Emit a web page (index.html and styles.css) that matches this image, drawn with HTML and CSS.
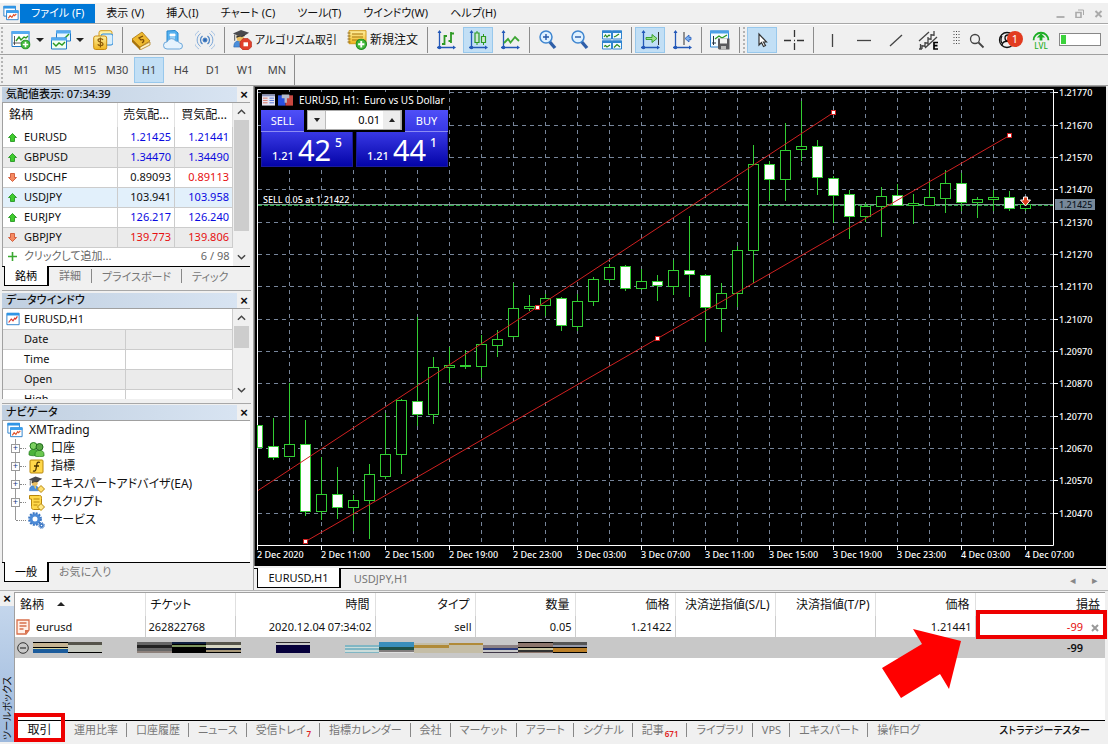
FILE: index.html
```
<!DOCTYPE html>
<html lang="ja">
<head>
<meta charset="utf-8">
<title>XMTrading</title>
<link rel="stylesheet" href="styles.css">
</head>
<body>
<svg class="defs" width="0" height="0" aria-hidden="true">
  <defs>
    <linearGradient id="gold" x1="0" y1="0" x2="0" y2="1"><stop offset="0" stop-color="#fff0a0"/><stop offset="1" stop-color="#efb41c"/></linearGradient>
    <symbol id="i-up" viewBox="0 0 9 9"><path d="M4.500 0.500L8.500 4.500H6.500V8.500H2.500V4.500H.5z" fill="#3fcb2e" stroke="#1b8f16" stroke-width=".8"/></symbol>
    <symbol id="i-down" viewBox="0 0 9 9"><path d="M4.500 8.500L8.500 4.500H6.500V.5H2.500V4.500H.5z" fill="#f58a62" stroke="#cc4a26" stroke-width=".8"/></symbol>
    <symbol id="i-window" viewBox="0 0 16 16"><path d="M1 1.500h14v13H1z" fill="#fff" stroke="#1e78c8"/><path d="M1 1h14v3H1z" fill="#2f95e6"/><path d="M3 12l3-4 2 2 2-3 1 1 2-3" fill="none" stroke="#d8372c" stroke-width="1.300"/></symbol>
    <symbol id="i-app" viewBox="0 0 18 18"><path d="M1 1.500h13v11H1z" fill="#fff" stroke="#1e78c8"/><path d="M.5 1h14v3H.5z" fill="#2f95e6"/><path d="M4 6.500h13v10H4z" fill="#fff" stroke="#1e78c8"/><path d="M3.500 6h14v3h-14z" fill="#3aa0ee"/><path d="M6 15l2-3 2 2 2-3 1 1 2-2" fill="none" stroke="#e0522c" stroke-width="1.300"/></symbol>
    <symbol id="i-axes" viewBox="0 0 20 20"><path d="M3.500 1v18M1 17.500h17" stroke="#2358b8" stroke-width="1.300" fill="none"/><path d="M1.500 3l2-3 2 3zM17 15.500l3 2-3 2z" fill="#2358b8"/><circle cx="3.500" cy="17.500" r="1.800" fill="#2358b8"/></symbol>
    <symbol id="i-plus" viewBox="0 0 11 11"><circle cx="5.500" cy="5.500" r="5" fill="#42b83a" stroke="#1d8a20"/><path d="M5.500 2.500v6M2.500 5.500h6" stroke="#fff" stroke-width="1.800"/></symbol>
    <symbol id="i-grad" viewBox="0 0 20 20"><path d="M2 19c0-6 3-7 6-7s6 1 6 7z" fill="#4a8fdc" stroke="#265fa8" stroke-width=".6"/><circle cx="9" cy="8.500" r="4" fill="#eabf62"/><path d="M8 13h3l-1 4z" fill="#f3d060"/><path d="M1 4l9-4 9 3-8 5z" fill="#4a4a4e"/><path d="M5 6v3c3-2 6-2 9-2V5l-4 2z" fill="#333"/><path d="M3 5v7" stroke="#444"/></symbol>
  </defs>
</svg>

<header class="top">
  <nav class="menubar">
    <svg class="app-logo" viewBox="0 0 18 18"><use href="#i-app"/></svg>
    <button class="menu menu-on">ファイル (F)</button>
    <button class="menu">表示 (V)</button>
    <button class="menu">挿入(I)</button>
    <button class="menu">チャート (C)</button>
    <button class="menu">ツール(T)</button>
    <button class="menu">ウインドウ(W)</button>
    <button class="menu">ヘルプ(H)</button>
    <div class="win-ctl">
      <button aria-label="最小化"><svg viewBox="0 0 9 9"><path d="M.5 8h8" stroke="#aaa" stroke-width="1.800"/></svg></button>
      <button aria-label="元に戻す"><svg viewBox="0 0 9 9"><path d="M1 3.500h5v5H1z" fill="none" stroke="#aaa" stroke-width="1.600"/><path d="M3 1h5.500v5" fill="none" stroke="#aaa"/></svg></button>
      <button aria-label="閉じる"><svg viewBox="0 0 9 9"><path d="M1.500 2l6 6M7.500 2l-6 6" stroke="#aaa" stroke-width="1.900"/></svg></button>
    </div>
  </nav>

  <div class="toolbar">
    <i class="grip"></i>
    <button class="tb tb-drop" aria-label="新規チャート"><svg viewBox="0 0 20 20"><path d="M1 1.500h17v15H1z" fill="#fff" stroke="#1e78c8"/><path d="M.5 1h18v3H.5z" fill="#55aaf0"/><path d="M3.500 6v9M2 13h13" stroke="#333" stroke-width=".8"/><path d="M5 11l3-4 2 3 3-3 2 1 2-2" fill="none" stroke="#2d9a23" stroke-width="1.400"/><use href="#i-plus" x="9.500" y="9.500" width="10" height="10"/></svg><b class="caret"></b></button>
    <button class="tb tb-drop" aria-label="プロファイル"><svg viewBox="0 0 20 20"><path d="M5.500 1h14v10h-14z" fill="#e8f6ff" stroke="#1e78c8"/><path d="M5 .5h15v3H5z" fill="#55aaf0"/><path d="M13 9l5-5" stroke="#2d9a23" stroke-width="1.400"/><path d="M.5 8h15v11H.5z" fill="#f4fff2" stroke="#1e78c8"/><path d="M0 7.500h16v3H0z" fill="#55aaf0"/><path d="M2 13l3 3 3-3 3 2 3-3" fill="none" stroke="#2d9a23" stroke-width="1.400"/></svg><b class="caret"></b></button>
    <button class="tb" aria-label="銘柄"><svg viewBox="0 0 20 20"><rect x="6" y=".7" width="13" height="14" rx="2" fill="#fff2a8" stroke="#d49a18"/><rect x="8" y="4" width="12" height="11" rx="2" fill="#d8eefc" stroke="#2b8ada"/><rect x=".7" y="6" width="13" height="13.500" rx="2" fill="url(#gold)" stroke="#c88a10"/><path d="M10 10c-1-2-5-2-5 .3s5 1.400 5 3.700-4 2-5.300.3M7.400 7.500v10" fill="none" stroke="#8c5a08" stroke-width="1.200"/></svg></button>
    <i class="sep"></i>
    <button class="tb" aria-label="マーケット"><svg viewBox="0 0 20 20"><path d="M1 9l8 8v3L1 12z" fill="#a8740c"/><path d="M9 17l10-5v3L9 20z" fill="#fff3c8" stroke="#a8740c" stroke-width=".7"/><path d="M1 9L11 2l8 9-10 6z" fill="#eeb930" stroke="#a8740c" stroke-width=".8"/><path d="M12 6l-4 2 2 2c3-1 4 1 1 3" fill="none" stroke="#7c4c06" stroke-width="1.300"/></svg></button>
    <button class="tb" aria-label="VPS"><svg viewBox="0 0 20 20"><path d="M4 1l8-.5 3 2.500v9H4z" fill="#55b0ee" stroke="#2588d0"/><path d="M7 4h5v2H7zM7 8h5" fill="#fff" stroke="#fff" stroke-width=".8"/><path d="M4 19a3.600 3.600 0 01.2-7.200A4.600 4.600 0 0112.600 11 3.500 3.500 0 0116.400 13 3 3 0 0116.500 19z" fill="#e6f3fd" stroke="#6aa6da"/></svg></button>
    <button class="tb" aria-label="シグナル"><svg viewBox="0 0 20 20" fill="none" stroke="#4d84c4"><circle cx="10" cy="10" r="2" fill="#2c68b4"/><path d="M7.500 6a5 5 0 000 8M12.500 6a5 5 0 010 8" stroke-width="1.300"/><path d="M5.500 3.500a8 8 0 000 13M14.500 3.500a8 8 0 010 13" stroke="#7aa6d8"/><path d="M4 1a10.500 10.500 0 000 18M16 1a10.500 10.500 0 010 18" stroke="#a8c4e4"/></svg></button>
    <i class="sep"></i>
    <button class="tb tb-algo"><svg viewBox="0 0 20 20"><use href="#i-grad" width="18" height="18"/><path d="M11 8.500h5l3.500 3.500v5L16 20h-5l-3-3v-5z" fill="#e0402c" stroke="#b0281a" stroke-width=".6"/><path d="M11.500 12.300h4.500v4h-4.500z" fill="#fff"/></svg>アルゴリズム取引</button>
    <button class="tb tb-order"><svg viewBox="0 0 20 20"><path d="M2 .7h17v13H2z" fill="url(#gold)" stroke="#d29a18"/><path d="M5 4h11M5 7h11M5 10h8" stroke="#a8740c" stroke-width="1.100"/><path d="M.5 3h3M.5 6h3M.5 9h3M.5 12h3" stroke="#8c6a20"/><use href="#i-plus" x="8.500" y="8.500" width="11.500" height="11.500"/></svg>新規注文</button>
    <i class="sep"></i>
    <button class="tb" aria-label="バーチャート"><svg viewBox="0 0 20 20"><use href="#i-axes"/><path d="M8.500 5v10M6 14h2M8.500 6h2.500M15 2v11M12.500 11h2.500M15 3.500h3" stroke="#2d9a23" stroke-width="1.800"/></svg></button>
    <button class="tb tb-on" aria-label="ローソク足"><svg viewBox="0 0 20 20"><use href="#i-axes"/><path d="M9 1v14M15.500 4v11" stroke="#2d9a23"/><path d="M7 3h4v9.500H7zM13.500 6.500h4v6h-4z" fill="#cfe8d4" stroke="#2d9a23" stroke-width="1.200"/></svg></button>
    <button class="tb" aria-label="ラインチャート"><svg viewBox="0 0 20 20"><use href="#i-axes"/><path d="M4 13l4-4 2.500 3.500L15 7l4 4" fill="none" stroke="#3da634" stroke-width="1.800"/></svg></button>
    <i class="sep"></i>
    <button class="tb" aria-label="拡大"><svg viewBox="0 0 20 20"><path d="M11 11l6 7" stroke="#2f5fa8" stroke-width="3.400"/><circle cx="8" cy="7" r="6" fill="#dff1ff" stroke="#3f86d0" stroke-width="1.500"/><path d="M8 4v6M5 7h6" stroke="#2458a8" stroke-width="1.400"/></svg></button>
    <button class="tb" aria-label="縮小"><svg viewBox="0 0 20 20"><path d="M11 11l6 7" stroke="#2f5fa8" stroke-width="3.400"/><circle cx="8" cy="7" r="6" fill="#dff1ff" stroke="#3f86d0" stroke-width="1.500"/><path d="M5 7h6" stroke="#2458a8" stroke-width="1.400"/></svg></button>
    <button class="tb" aria-label="ウインドウの整列"><svg viewBox="0 0 20 20"><path d="M.5 1h9v8h-9zM10.500 1h9v8h-9zM.5 11h9v8h-9zM10.500 11h9v8h-9z" fill="#f4fbff" stroke="#2f84d0"/><path d="M0 .5h20v2.500H0zM0 10.500h20V13H0z" fill="#2f84d0"/><path d="M2 7l1.500-2 1.500 2 2-2 1 1M12 7l2-1 3-2M2 16.500l1.500-1 1.500 1.500 3-2M12 17.500l3-3 3 2.500" fill="none" stroke="#2d8a23" stroke-width="1.200"/></svg></button>
    <i class="sep"></i>
    <button class="tb tb-on" aria-label="自動スクロール"><svg viewBox="0 0 20 20"><use href="#i-axes"/><path d="M18.500 2v13" stroke="#333"/><path d="M6 7.500h6V4.500l5 4-5 4v-3H6z" fill="#9be08a" stroke="#2d9a23" stroke-width=".9"/></svg></button>
    <button class="tb" aria-label="チャートシフト"><svg viewBox="0 0 20 20"><use href="#i-axes"/><path d="M12 2v13" stroke="#333"/><path d="M19 7.300h-2V5l-4 3.500 4 3.500V9.700h2z" fill="#7ab0f0" stroke="#2358b8" stroke-width=".8"/></svg></button>
    <i class="sep"></i>
    <button class="tb" aria-label="テンプレート"><svg viewBox="0 0 20 20"><path d="M.5 1h18v16H.5z" fill="#f4fbff" stroke="#2f84d0"/><path d="M0 .5h19v3H0z" fill="#4ba0e6"/><path d="M3.500 6v9M2 13h4" stroke="#234"/><path d="M5 9l4-3 3 2 5-3" fill="none" stroke="#2d9a23" stroke-width="1.300"/><path d="M8 8.500h11.500v11H9L8 18.500z" fill="#58585c"/><path d="M10 8.500h7v5h-7z" fill="#f2f2f2"/><path d="M11 16h5v3.500h-5z" fill="#bbb"/></svg></button>
    <i class="sep"></i>
    <i class="grip grip-in"></i>
    <button class="tb tb-on" aria-label="カーソル"><svg viewBox="0 0 20 20"><path d="M7 4v11l2.500-2.500 2 4 2-1-2-3.500h3z" fill="#fff" stroke="#333" stroke-width="1.200"/></svg></button>
    <button class="tb" aria-label="十字線"><svg viewBox="0 0 20 20"><path d="M10.500 0v7M10.500 13v7M0 10.500h7M13 10.500h7M10 10.500h1" stroke="#333" stroke-width="1.300"/></svg></button>
    <i class="sep"></i>
    <button class="tb" aria-label="垂直線"><svg viewBox="0 0 20 20"><path d="M10.500 4v13" stroke="#444" stroke-width="1.300"/></svg></button>
    <button class="tb" aria-label="水平線"><svg viewBox="0 0 20 20"><path d="M3 10.500h14" stroke="#444" stroke-width="1.300"/></svg></button>
    <button class="tb" aria-label="トレンドライン"><svg viewBox="0 0 20 20"><path d="M4 16L16 5" stroke="#444" stroke-width="1.300"/></svg></button>
    <button class="tb" aria-label="エクイディスタントチャネル"><svg viewBox="0 0 20 20"><path d="M1 11L11 2M7 18L19 7M1 19h3M4 15v4M4 16h3M7 12v5M7 13h3M10 7v8M10 9h3M13 4v6M13 5h3M16 1v5M2.500 14v5" stroke="#444" stroke-width="1.300"/><path d="M20 12.500h-4v6.500h4M16 15.700h3.500" fill="none" stroke="#000" stroke-width="1.700"/></svg></button>
    <svg class="dots" viewBox="0 0 7 13"><path d="M.5 .5h6M.5 3.500h6M.5 6.500h6M.5 9.500h6M.5 12.500h6" stroke="#444" stroke-dasharray="1 1.500"/></svg>
    <button class="tb tb-slim" aria-label="検索"><svg viewBox="0 0 20 20"><circle cx="9" cy="9" r="4.500" fill="none" stroke="#444" stroke-width="1.300"/><path d="M12.500 12.500l5 5" stroke="#444" stroke-width="1.800"/></svg></button>
    <button class="tb tb-user" aria-label="アカウント"><svg viewBox="0 0 20 20" fill="none" stroke="#111" stroke-width="1.300"><circle cx="10" cy="10" r="7.500"/><circle cx="11" cy="8" r="3"/><path d="M5 15c1-5 9-5 11 0M5 6c-2 3-1 7 1 8"/></svg><span class="badge">1</span></button>
    <button class="tb tb-lvl" aria-label="LVL"><svg viewBox="0 0 20 13"><path d="M2 11a8 8 0 1116 0" fill="none" stroke="#1cae24" stroke-width="2"/><path d="M10 3.500l4.500 4.500h-3v3.500h-3V8h-3z" fill="#1cae24"/></svg><span>LVL</span></button>
    <div class="battery"><i></i></div>
  </div>

  <div class="timebar">
    <i class="grip"></i>
    <button class="tf">M1</button><button class="tf">M5</button><button class="tf">M15</button><button class="tf">M30</button><button class="tf tf-on">H1</button><button class="tf">H4</button><button class="tf">D1</button><button class="tf">W1</button><button class="tf">MN</button>
    <i class="sep"></i>
  </div>
</header>

<main class="middle">
  <aside class="side">
    <section class="panel panel-quotes">
      <h2 class="title"><span>気配値表示: 07:34:39</span><button class="close" aria-label="閉じる">×</button></h2>
      <div class="body">
        <table class="quotes">
          <colgroup><col><col class="q-bid"><col class="q-ask"></colgroup>
          <thead><tr><th>銘柄</th><th>売気配...</th><th>買気配...</th></tr></thead>
          <tbody>
            <tr><td><svg viewBox="0 0 9 9"><use href="#i-up"/></svg>EURUSD</td><td class="up">1.21425</td><td class="up">1.21441</td></tr>
            <tr class="alt"><td><svg viewBox="0 0 9 9"><use href="#i-up"/></svg>GBPUSD</td><td class="up">1.34470</td><td class="up">1.34490</td></tr>
            <tr><td><svg viewBox="0 0 9 9"><use href="#i-down"/></svg>USDCHF</td><td>0.89093</td><td class="dn">0.89113</td></tr>
            <tr class="sel"><td><svg viewBox="0 0 9 9"><use href="#i-up"/></svg>USDJPY</td><td>103.941</td><td class="up">103.958</td></tr>
            <tr><td><svg viewBox="0 0 9 9"><use href="#i-up"/></svg>EURJPY</td><td class="up">126.217</td><td class="up">126.240</td></tr>
            <tr class="alt"><td><svg viewBox="0 0 9 9"><use href="#i-down"/></svg>GBPJPY</td><td class="dn">139.773</td><td class="dn">139.806</td></tr>
            <tr class="add"><td colspan="2"><svg viewBox="0 0 9 9"><path d="M4.500 0v9M0 4.500h9" stroke="#3aa830" stroke-width="1.600"/></svg>クリックして追加...</td><td>6 / 98</td></tr>
          </tbody>
        </table>
        <div class="scroll"><svg viewBox="0 0 10 6"><path d="M1 5l4-4 4 4"/></svg><i class="thumb thumb-long"></i><svg viewBox="0 0 10 6"><path d="M1 1l4 4 4-4"/></svg></div>
      </div>
      <div class="tabs"><button class="tab tab-on">銘柄</button><button class="tab">詳細</button><button class="tab">プライスボード</button><button class="tab">ティック</button></div>
    </section>

    <section class="panel panel-data">
      <h2 class="title"><span>データウインドウ</span><button class="close" aria-label="閉じる">×</button></h2>
      <div class="body">
        <table class="data">
          <colgroup><col class="d-name"><col></colgroup>
          <tbody>
            <tr><td colspan="2" class="d-head"><svg viewBox="0 0 16 16"><use href="#i-window"/></svg>EURUSD,H1</td></tr>
            <tr class="alt"><td>Date</td><td></td></tr>
            <tr><td>Time</td><td></td></tr>
            <tr class="alt"><td>Open</td><td></td></tr>
            <tr><td>High</td><td></td></tr>
          </tbody>
        </table>
        <div class="scroll"><svg viewBox="0 0 10 6"><path d="M1 5l4-4 4 4"/></svg><i class="thumb thumb-short"></i><svg viewBox="0 0 10 6"><path d="M1 1l4 4 4-4"/></svg></div>
      </div>
    </section>

    <section class="panel panel-nav">
      <h2 class="title"><span>ナビゲータ</span><button class="close" aria-label="閉じる">×</button></h2>
      <div class="body tree">
        <div class="root"><svg viewBox="0 0 18 18"><use href="#i-app"/></svg>XMTrading</div>
        <ul>
          <li><i class="exp">+</i><svg viewBox="0 0 17 17"><path d="M1 13c0-5 9-5 9 0v2c-2 1-7 1-9 0z" fill="#4db33a" stroke="#1f7a1a" stroke-width=".7"/><circle cx="5.500" cy="6" r="3.500" fill="#7cd060" stroke="#1f7a1a"/><path d="M7 14c0-5 9-5 9 0v2c-2 1-7 1-9 0z" fill="#6cc850" stroke="#1f7a1a" stroke-width=".7"/><circle cx="11.500" cy="7" r="3.500" fill="#58a844" stroke="#1f6a1a"/></svg>口座</li>
          <li><i class="exp">+</i><svg viewBox="0 0 17 17"><rect x="2" y="2" width="13" height="13" rx="1" fill="#ffd84a" stroke="#b8860b"/><path d="M12 4.500c-2-1-3 0-3.200 2L8 11c-.3 2-1.500 2.500-3 1.800M6 8h5" fill="none" stroke="#4a3200" stroke-width="1.300"/></svg>指標</li>
          <li><i class="exp">+</i><svg viewBox="0 0 17 17"><use href="#i-grad" width="15" height="16"/><path d="M13 9.500l3.500 3.500-3.500 3.500L9.500 13z" fill="#ffe070" stroke="#b8860b"/></svg>エキスパートアドバイザ(EA)</li>
          <li><i class="exp">+</i><svg viewBox="0 0 17 17"><path d="M1.500 1.500h10c2 0 2 1 2 3v11h-8c-2 0-2-2-2-3V5h-2z" fill="#ffd84a" stroke="#b8860b"/><path d="M5.500 5h6M5.500 8h6M5.500 11h4" stroke="#b8860b"/><path d="M13 9.500l3.500 3.500-3.500 3.500L9.500 13z" fill="#ffe98a" stroke="#b8860b"/></svg>スクリプト</li>
          <li><i class="exp exp-none"></i><svg viewBox="0 0 17 17" fill="none"><circle cx="7" cy="7" r="4" stroke="#4c8ad6" stroke-width="3"/><circle cx="7" cy="7" r="6" stroke="#3a76c4" stroke-width="1.800" stroke-dasharray="2 1.140"/><circle cx="13.500" cy="13.500" r="1.600" stroke="#3a76c4" stroke-width="1.600"/><circle cx="13.500" cy="13.500" r="2.900" stroke="#3a76c4" stroke-dasharray="1.200 1.080"/></svg>サービス</li>
        </ul>
      </div>
      <div class="tabs"><button class="tab tab-on">一般</button><button class="tab">お気に入り</button></div>
    </section>
  </aside>

  <section class="chart-pane">
    <div class="chart-box">
      <svg id="chart" class="chart" viewBox="0 0 850 479" preserveAspectRatio="xMinYMin meet"></svg>
      <div class="quick">
        <div class="quick-head">
          <svg viewBox="0 0 14 12"><path d="M0 0h14v12H0z" fill="#e8e8f4"/><path d="M0 0h14v2H0z" fill="#8890b8"/><path d="M1 4h5M1 6.500h5M1 9h5" stroke="#d87060"/><path d="M8 4h5M8 6.500h5M8 9h5" stroke="#5070d8"/></svg>
          <svg class="wide" viewBox="0 0 16 12"><path d="M0 1h8v11H0z" fill="#2850e0"/><path d="M8 1h8v11H8z" fill="#c84840"/><path d="M4 0h8v4H4zM7 3h2.500v6H7z" fill="#b4bccc"/></svg>
          <span>EURUSD, H1:&nbsp; Euro vs US Dollar</span>
        </div>
        <div class="quick-top">
          <button class="side-btn">SELL</button>
          <div class="spin"><button class="step" aria-label="減らす"><b class="caret"></b></button><input aria-label="数量" value="0.01"><button class="step" aria-label="増やす"><b class="caret caret-up"></b></button></div>
          <button class="side-btn">BUY</button>
        </div>
        <div class="quick-prices">
          <button class="price"><small>1.21</small><strong>42</strong><sup>5</sup></button>
          <button class="price"><small>1.21</small><strong>44</strong><sup>1</sup></button>
        </div>
      </div>
    </div>
    <div class="chart-tabs">
      <button class="ctab ctab-on">EURUSD,H1</button>
      <button class="ctab">USDJPY,H1</button>
      <div class="pager"><button aria-label="前へ">◂</button><button aria-label="次へ">▸</button></div>
    </div>
  </section>
</main>

<section class="toolbox">
  <div class="strip"><button class="close" aria-label="閉じる">×</button><div class="strip-label">ツールボックス</div></div>
  <div class="tool-main">
    <table class="trades">
      <colgroup><col class="c-sym"><col class="c-ticket"><col class="c-time"><col class="c-std"><col class="c-std"><col class="c-std"><col class="c-std"><col class="c-std"><col class="c-std"><col></colgroup>
      <thead><tr><th>銘柄 <b class="caret caret-up"></b></th><th>チケット</th><th>時間</th><th>タイプ</th><th>数量</th><th>価格</th><th>決済逆指値(S/L)</th><th>決済指値(T/P)</th><th>価格</th><th>損益</th></tr></thead>
      <tbody>
        <tr><td><svg viewBox="0 0 14 16"><path d="M2 1h11v10l-3 4H1V1z" fill="#fff0e8" stroke="#d8704c" stroke-width="1.300"/><path d="M3.500 4h7M3.500 7h7M3.500 10h4" stroke="#d8704c" stroke-width="1.300"/><path d="M9 15v-4h4z" fill="#d8704c"/></svg>eurusd</td><td>262822768</td><td>2020.12.04 07:34:02</td><td>sell</td><td>0.05</td><td>1.21422</td><td></td><td></td><td>1.21441</td><td class="pl">-99<button aria-label="決済"><svg viewBox="0 0 8 8"><path d="M1 1l6 6M7 1L1 7" stroke="#999" stroke-width="2"/></svg></button></td></tr>
        <tr class="total"><td colspan="9"><div class="total-line">
          <svg class="minus" viewBox="0 0 12 12"><circle cx="6" cy="6" r="5.300" fill="none" stroke="#333"/><path d="M3 6h6" stroke="#333" stroke-width="1.200"/></svg>
          <svg class="mosaic" viewBox="0 0 554 11" shape-rendering="crispEdges">
            <g><path fill="#c6b493" d="M0 0h35v11H0z"/><path fill="#000" d="M0 0h35v1H0zM0 5h35v1H0z"/><path fill="#d8d4a0" d="M0 6h35v1H0z"/><path fill="#1c5c9c" d="M0 7h35v4H0z"/></g>
            <g><path fill="#c6c9c0" d="M35 0h34v11H35z"/><path fill="#55544a" d="M35 0h34v3H35z"/><path fill="#000" d="M35 10h34v1H35z"/></g>
            <g><path fill="#666" d="M104 0h35v11h-35z"/><path fill="#222" d="M104 3h35v3h-35z"/><path fill="#8d817b" d="M104 9h35v2h-35z"/></g>
            <g><path fill="#000" d="M139 0h34v11h-34z"/><path fill="#102040" d="M139 0h34v2h-34z"/><path fill="#7d955f" d="M139 3h34v2h-34z"/></g>
            <g><path fill="#d6d6c2" d="M173 0h35v11h-35z"/><path fill="#55544a" d="M173 0h35v3h-35z"/><path fill="#101830" d="M173 6h35v2h-35z"/><path fill="#a89878" d="M173 8h35v2h-35z"/><path fill="#000" d="M173 10h35v1h-35z"/></g>
            <g><path fill="#302c30" d="M243 0h34v1h-34z"/><path fill="#06003c" d="M243 3h34v8h-34z"/></g>
            <g><path fill="#80b6c4" d="M312 3h34v2h-34zM312 6h34v2h-34zM312 10h34v1h-34z"/><path fill="#cbdcda" d="M312 5h34v1h-34zM312 8h34v2h-34z"/></g>
            <g><path fill="#3a8fbc" d="M346 0h35v5h-35z"/><path fill="#1f5148" d="M346 5h35v3h-35z"/><path fill="#807c7c" d="M346 8h35v2h-35z"/><path fill="#ddd" d="M346 10h35v1h-35z"/></g>
            <g><path fill="#c4bda6" d="M381 1h69v10h-69z"/><path fill="#b08a38" d="M381 3h35v3h-35zM416 1h34v2h-34z"/></g>
            <g><path fill="#8b8082" d="M450 3h35v3h-35z"/><path fill="#2c3c7c" d="M450 6h35v2h-35z"/><path fill="#403848" d="M450 10h35v1h-35z"/></g>
            <g><path fill="#8c756c" d="M485 0h35v11h-35z"/><path fill="#000" d="M485 0h35v1h-35zM485 5h35v1h-35z"/><path fill="#c8c4a0" d="M485 6h35v2h-35z"/><path fill="#333" d="M485 8h35v2h-35z"/></g>
            <g><path fill="#555" d="M520 0h34v3h-34z"/><path fill="#9498a8" d="M520 3h34v2h-34z"/><path fill="#000" d="M520 5h34v6h-34z"/><path fill="#bc8028" d="M520 6h34v4h-34z"/></g>
          </svg></div></td><td class="sum">-99</td></tr>
      </tbody>
    </table>
    <div class="tool-tabs">
      <button class="ttab ttab-on">取引</button><button class="ttab">運用比率</button><button class="ttab">口座履歴</button><button class="ttab">ニュース</button><button class="ttab">受信トレイ<sub>7</sub></button><button class="ttab">指標カレンダー</button><button class="ttab">会社</button><button class="ttab">マーケット</button><button class="ttab">アラート</button><button class="ttab">シグナル</button><button class="ttab">記事<sub>671</sub></button><button class="ttab">ライブラリ</button><button class="ttab">VPS</button><button class="ttab">エキスパート</button><button class="ttab">操作ログ</button>
      <button class="tester">ストラテジーテスター</button>
    </div>
    <div class="mark mark-pl"></div>
    <div class="mark mark-tab"></div>
    <svg class="arrow" viewBox="0 0 79 69"><path d="M31 0l48 12-12 48-9-15-39 24L0 39l40-24z" fill="#f00"/></svg>
  </div>
</section>
<script src="chart.js"></script>
</body>
</html>
```
FILE: styles.css
```
* { box-sizing: border-box; }
body {
  margin: 0;
  min-height: 100vh;
  display: flex;
  flex-direction: column;
  background: #f0f0f0;
  color: #111;
  font: 11px/16px "Noto Sans", "Noto Sans CJK JP", sans-serif;
  font-feature-settings: "palt";
}
button, input { font: inherit; color: inherit; font-feature-settings: inherit; }
button { border: 0; padding: 0; background: none; white-space: nowrap; }
svg { display: block; flex: none; }
.defs { position: absolute; }
.caret { display: block; flex: none; border: 4px solid transparent; border-top-color: #222; border-bottom: 0; }
.caret-up { border-top: 0; border-bottom: 4px solid #222; }

/* menu */
.menubar { display: flex; align-items: center; height: 24px; padding-top: 3px; border-bottom: 1px solid #a8a8a8; box-shadow: inset 0 3px #fff; }
.app-logo { width: 16px; height: 16px; margin: 0 1px 0 3px; }
.menu { height: 19px; padding: 0 11px; line-height: 18px; }
.menu-on { background: #0078d7; color: #fff; }
.win-ctl { display: flex; gap: 10px; margin-left: auto; padding-right: 5px; }
.win-ctl svg { width: 9px; height: 9px; }

/* toolbars */
.toolbar, .timebar { display: flex; align-items: center; height: 31px; border-bottom: 1px solid #a0a0a0; }
.toolbar { gap: 2px; border-top: 1px solid #fff; }
.grip { flex: none; width: 2px; height: 26px; margin: 0 3px 0 1px; border-left: 2px dotted #b4b4b4; }
.grip-in { margin: 0; }
.sep { flex: none; width: 1px; height: 26px; margin: 0 1px 0 2px; background: #8c8c8c; }
.tb { position: relative; display: flex; flex: none; align-items: center; justify-content: center; width: 30px; height: 26px; font-size: 12px; }
.tb svg { width: 20px; height: 20px; }
.tb-drop { width: 38px; gap: 5px; }
.tb-on { background: #c2dff5; border: 1px solid #98c8ec; }
.tb-algo { width: 113px; justify-content: flex-start; gap: 3px; padding-left: 4px; font-size: 11px; }
.tb-order { width: 80px; justify-content: flex-start; gap: 3px; padding-left: 4px; }
.dots { width: 7px; height: 13px; margin: 0 2px 4px 8px; }
.tb-slim { width: 24px; }
.tb-user { width: 34px; }
.badge { position: absolute; right: 1px; top: 4px; width: 16px; height: 16px; border-radius: 8px; background: #e23b20; color: #fff; font-size: 11px; line-height: 16px; }
.tb-lvl { flex-direction: column; color: #1cae24; font-size: 8px; line-height: 8px; font-weight: 500; }
.tb-lvl svg { width: 20px; height: 12px; }
.battery { flex: none; width: 42px; height: 13px; margin-left: 1px; padding: 1px; border: 1px solid #888; background: #fff; }
.battery i { display: block; width: 5px; height: 9px; background: #3cd23c; }
.timebar .tf { width: 30px; height: 26px; margin-right: 2px; color: #444; }
.timebar .tf-on { background: #c2dff5; border: 1px solid #98c8ec; }
.timebar .sep { margin: 0; height: 30px; }

/* side panels */
.middle { display: flex; border-bottom: 1px solid #b4b4b4; }
.side { flex: none; width: 254px; padding: 1px 2px 0; border-right: 1px solid #a0a0a0; }
.panel { display: flex; flex-direction: column; }
.panel-quotes { height: 204px; border-bottom: 1px solid #a8a8a8; }
.panel-data { height: 111px; margin-top: 2px; border-bottom: 1px solid #a8a8a8; }
.panel-nav { height: 181px; margin-top: 1px; }
.title { display: flex; justify-content: space-between; margin: 0; height: 15px; font-size: 11px; line-height: 14px; font-weight: 500; }
.title span { flex: 1; padding-left: 4px; background: linear-gradient(90deg, #c0cfe0, #d8e4f2); }
.close { width: 14px; font: bold 13px/14px "Liberation Sans", sans-serif; }
.panel .body { display: flex; flex: 1; min-height: 0; overflow: hidden; margin-right: 1px; border: 1px solid #a0a0a0; border-width: 1px 0 0 1px; background: #fff; }
.panel-data .body { margin-bottom: 4px; }
.panel table { flex: 1; align-self: flex-start; border-collapse: collapse; table-layout: fixed; }
.quotes th { height: 24px; padding: 0 5px; font-weight: 400; font-size: 12px; text-align: right; white-space: nowrap; border-right: 1px solid #e2e2e2; }
.quotes th:first-child { text-align: left; padding-left: 6px; }
.quotes td { height: 20px; padding: 0 3px; text-align: right; border-right: 1px solid #ccc; border-bottom: 1px solid #ccc; white-space: nowrap; }
.quotes td:first-child { padding-left: 21px; text-align: left; }
.quotes td svg { float: left; width: 9px; height: 9px; margin: 4px 0 0 -16px; }
.q-bid { width: 57px; }
.q-ask { width: 58px; }
.alt { background: #ebebeb; }
.sel { background: #e2f0fb; }
.up { color: #0a0ae0; }
.dn { color: #e61010; }
.quotes .add td { height: 18px; color: #666; border: 0; }
.scroll { flex: none; display: flex; flex-direction: column; align-items: center; width: 17px; padding: 6px 0; background: #f0f0f0; }
.scroll svg { width: 9px; height: 6px; fill: none; stroke: #444; stroke-width: 1.600; }
.thumb { width: 15px; margin: 5px 0 auto; background: #cdcdcd; }
.thumb-long { height: 111px; }
.thumb-short { height: 22px; }
.tabs { display: flex; height: 24px; margin-right: 1px; border-top: 1px solid #000; }
.tab { height: 17px; padding: 0 10px; color: #777; position: relative; line-height: 17px; font-size: 11px; }
.tab-on { height: 20px; width: 45px; margin: -1px 0 0 2px; padding: 0; border: 1px solid #000; border-top: 0; border-right-width: 2px; background: #fff; color: #000; }
.tab + .tab + .tab { border-left: 1px solid #888; height: 14px; margin-top: 2px; line-height: 13px; }
.d-name { width: 122px; }
.data td { height: 20px; padding: 0 0 0 21px; border-bottom: 1px solid #ccc; border-right: 1px solid #ccc; }
.d-head svg { float: left; width: 14px; height: 14px; margin: 1px 0 0 -18px; }
.panel .tree { display: block; padding: 0 0 0 4px; font-size: 12px; }
.root { display: flex; align-items: center; gap: 6px; height: 18px; }
.root svg { width: 16px; height: 16px; }
.tree ul { margin: 0; padding: 0; list-style: none; }
.tree li { display: flex; align-items: center; height: 18px; padding-left: 4px; background: linear-gradient(#999, #999) 8px 0 / 1px 18px no-repeat; }
.tree li:last-child { background-size: 1px 9px; }
.tree li svg { width: 17px; height: 17px; margin: 0 6px 0 8px; }
.exp { position: relative; width: 9px; height: 9px; border: 1px solid #999; background: #fff; color: #223c80; font: 9px/7px "Liberation Sans", sans-serif; text-align: center; }
.exp::after { content: ""; position: absolute; left: 8px; top: 3px; width: 6px; border-top: 1px dotted #888; }
.exp-none { border-color: transparent; background: none; }
.exp-none::after { left: 4px; width: 10px; }

/* chart */
.chart-pane { flex: 1; min-width: 0; display: flex; flex-direction: column; margin-right: 2px; }
.chart-box { position: relative; background: #000; border: 1px solid #666; border-width: 1px 0 0 1px; }
.chart { width: 100%; height: 479px; font-size: 9px; font-weight: 500; fill: #fff; }
.grid { stroke: #77859a; stroke-dasharray: 4 4; }
.frame { stroke: #fff; fill: none; }
.wick { stroke: #32cd32; }
.bull { fill: #000; stroke: #32cd32; }
.bear { fill: #fff; stroke: #32cd32; }
.trend { stroke: #d02020; }
.knob { fill: #fff; stroke: #d02020; }
.tag { fill: #778899; }
.tag-text { fill: #0c1420; }
.quick { position: absolute; left: 6px; top: 5px; width: 187px; color: #fff; background: #000; }
.quick-head { display: flex; align-items: center; gap: 3px; height: 16px; padding-left: 1px; font-size: 10px; white-space: nowrap; }
.quick-head svg { width: 13px; height: 12px; }
.quick-head .wide { width: 15px; }
.quick-head span { padding-left: 3px; }
.quick-top { display: flex; gap: 3px; margin-top: 2px; }
.side-btn { width: 43px; height: 22px; background: linear-gradient(#4f4ff8, #3838e4); font-size: 11px; line-height: 20px; border-bottom: 1px solid #8c8cf4; }
.spin { display: flex; flex: 1; height: 20px; background: #fff; border: 1px solid #aaa; }
.spin input { flex: 1; min-width: 0; width: 20px; border: 0; padding: 0 3px; background: #fff; color: #000; text-align: right; }
.step { display: flex; align-items: center; justify-content: center; width: 18px; background: #ececec; border: 0 solid #bbb; border-right-width: 1px; }
.step .caret { border-left-width: 3px; border-right-width: 3px; }
.quick-prices { display: flex; gap: 3px; }
.price { flex: 1; display: flex; justify-content: center; align-items: flex-start; gap: 4px; height: 35px; background: linear-gradient(#3838e4, #0404a8); border: 1px solid #1a1a9c; border-top: 0; }
.price small { font-size: 11px; line-height: 16px; margin-top: 16px; font-weight: 500; }
.price strong { font-size: 29px; line-height: 36px; font-weight: 400; }
.price sup { font-size: 12px; line-height: 14px; margin-top: 4px; font-weight: 500; }
.chart-tabs { display: flex; height: 22px; margin-top: 2px; padding-left: 3px; font-size: 11px; position: relative; border-top: 1px solid #000; }
.ctab { height: 19px; width: 80px; color: #777; line-height: 19px; }
.ctab-on { width: 84px; margin-top: -1px; height: 20px; background: #fff; color: #111; border: 1px solid #000; border-top: 0; border-right-width: 2px; }
.pager { margin-left: auto; display: flex; color: #888; }
.pager button { width: 22px; }

/* toolbox */
.toolbox { flex: 1; display: flex; padding: 0 3px 2px 0; }
.strip { flex: none; display: flex; flex-direction: column; width: 14px; }
.strip .close { height: 15px; }
.strip-label { flex: 1; writing-mode: vertical-rl; text-orientation: sideways; text-align: left; background: linear-gradient(#9cb8dc, #c4d6ec); transform: rotate(180deg); line-height: 14px; font-size: 10px; padding-top: 2px; white-space: nowrap; }
.tool-main { position: relative; flex: 1; min-width: 0; display: flex; flex-direction: column; border: 1px solid #a0a0a0; border-width: 1px 0 0 1px; background: #fff; margin-top: 1px; }
.trades { width: 100%; border-collapse: collapse; table-layout: fixed; }
.c-sym { width: 130px; }
.c-ticket { width: 90px; }
.c-time { width: 140px; }
.c-std { width: 100px; }
.trades th { height: 23px; padding: 0 5px; font-weight: 400; text-align: right; white-space: nowrap; border-right: 1px solid #e0e0e0; font-size: 12px; }
.trades td { height: 21px; padding: 0 3px; text-align: right; white-space: nowrap; border-right: 1px solid #ccc; }
.trades th:first-child, .trades th:nth-child(2), .trades td:first-child, .trades tbody td:nth-child(2) { text-align: left; }
.trades th:first-child .caret { display: inline-block; margin: 0 0 3px 10px; }
.trades td:first-child { padding-left: 21px; }
.trades td:first-child > svg { float: left; width: 14px; height: 16px; margin: 0 0 0 -20px; }
.trades th:last-child, .trades td:last-child { border-right: 0; }
.trades td.pl { color: #e61010; padding-right: 6px; }
.pl button { margin-left: 8px; vertical-align: middle; }
.pl svg { width: 8px; height: 8px; }
.total { background: #c8c8c8; }
.trades .total td { border: 0; padding-left: 2px; }
.trades .total td.sum { text-align: right; padding-right: 22px; font-weight: 600; }
.total-line { display: flex; align-items: center; gap: 4px; }
.minus { width: 12px; height: 12px; }
.mosaic { width: 554px; height: 11px; }
.tool-tabs { display: flex; align-items: flex-start; margin-top: auto; height: 22px; border-top: 1px solid #000; background: #f0f0f0; }
.ttab { display: flex; height: 14px; margin-top: 2px; padding: 0 8px 0 9px; border-right: 1px solid #888; color: #777; line-height: 13px; font-size: 11px; }
.ttab-on { width: 50px; height: 20px; margin-top: 0; padding: 0; justify-content: center; background: #fff; color: #111; line-height: 17px; font-size: 12px; }
.ttab:nth-child(15) { border: 0; }
.ttab sub { font-size: 8px; line-height: 8px; color: #e02020; margin: 7px 0 0 1px; font-weight: 600; }
.tester { margin: 1px 15px 0 auto; font-weight: 500; font-size: 10px; }
.mark { position: absolute; border: 4px solid #ee0000; }
.mark-pl { right: -2px; top: 17px; width: 131px; height: 29px; }
.mark-tab { left: -1px; bottom: 0; width: 51px; height: 29px; }
.arrow { position: absolute; right: 144px; top: 36px; width: 79px; height: 69px; }
```
FILE: chart.js
```
// Chart coordinates: the plot starts at x = 2, one candle every 16 px.
const svg = document.getElementById('chart');
const NS = 'http://www.w3.org/2000/svg';

function add(tag, attrs, text) {
  const el = document.createElementNS(NS, tag);
  for (const key in attrs) el.setAttribute(key, attrs[key]);
  if (text) el.textContent = text;
  svg.appendChild(el);
}
function line(cls, x1, y1, x2, y2) {
  add('line', { class: cls, x1, y1, x2, y2 });
}

const rows = [5, 38, 70, 102, 135, 167, 199, 232, 264, 296, 329, 361, 393, 426];
rows.forEach((y, i) => {
  line('grid', 3, y + 0.5, 798, y + 0.5);
  line('frame', 799, y + 0.5, 803, y + 0.5);
  add('text', { x: 804, y: y + 4 }, ((121770 - i * 100) / 100000).toFixed(5));
});
for (let x = 34; x <= 770; x += 32) line('grid', x + 0.5, 3, x + 0.5, 457);

add('path', { class: 'frame', d: 'M2.5 458V2.500H798.500V458.500H2.500' });
const times = ['2 Dec 2020', '2 Dec 11:00', '2 Dec 15:00', '2 Dec 19:00', '2 Dec 23:00', '3 Dec 03:00',
  '3 Dec 07:00', '3 Dec 11:00', '3 Dec 15:00', '3 Dec 19:00', '3 Dec 23:00', '4 Dec 03:00', '4 Dec 07:00'];
times.forEach((t, i) => {
  line('frame', 2.5 + i * 64, 458, 2.5 + i * 64, 463);
  add('text', { x: 2 + i * 64, y: 471 }, t);
});

add('line', { x1: 3, y1: 117.5, x2: 798, y2: 117.5, stroke: '#7f9a94' });
add('line', { x1: 3, y1: 118.5, x2: 798, y2: 118.5, stroke: '#2fae4a', 'stroke-dasharray': '4 2' });

// high, body top, body bottom, low, 1 = falling
const candles = [
  [338, 338, 360, 360, 1], [331, 359, 370, 373, 1], [296, 357, 369, 369, 0], [333, 357, 424, 429, 1],
  [370, 407, 424, 433, 0], [380, 407, 420, 432, 1], [408, 413, 420, 444, 0], [377, 387, 413, 452, 0],
  [326, 367, 389, 392, 0], [312, 313, 367, 387, 0], [230, 314, 327, 339, 1], [270, 280, 327, 337, 0],
  [260, 278, 280, 296, 0], [263, 278, 279, 282, 0], [248, 257, 279, 291, 0], [243, 252, 258, 270, 0],
  [196, 221, 249, 251, 0], [208, 219, 221, 224, 0], [207, 211, 218, 229, 0], [210, 211, 238, 244, 1],
  [207, 214, 239, 244, 0], [190, 192, 214, 219, 0], [177, 180, 192, 196, 0], [178, 179, 201, 204, 1],
  [182, 194, 201, 203, 0], [188, 194, 198, 214, 1], [173, 183, 199, 208, 0], [129, 183, 187, 210, 1],
  [187, 188, 220, 255, 1], [196, 206, 221, 245, 0], [159, 163, 206, 220, 0], [58, 77, 163, 196, 0],
  [74, 77, 92, 114, 1], [36, 63, 92, 114, 0], [14, 59, 62, 74, 0], [53, 59, 90, 108, 1],
  [89, 91, 108, 136, 1], [103, 107, 129, 152, 1], [116, 119, 129, 135, 0], [100, 109, 119, 150, 0],
  [97, 108, 118, 118, 1], [107, 116, 118, 137, 0], [95, 110, 118, 118, 0], [83, 96, 111, 126, 0],
  [86, 96, 115, 124, 1], [110, 112, 115, 131, 0], [103, 110, 112, 124, 0], [104, 110, 121, 124, 1],
  [117, 117, 121, 124, 0]
];
candles.forEach(([hi, top, bot, lo, down], i) => {
  const x = 2 + i * 16;
  line('wick', x + 0.5, hi, x + 0.5, lo);
  const left = i === 0 ? x : x - 5;
  add('rect', { class: down ? 'bear' : 'bull', x: left + 0.5, y: top + 0.5, width: x + 5 - left, height: bot - top });
});

add('text', { x: 8, y: 116 }, 'SELL 0.05 at 1.21422');

line('trend', 3, 403.5, 578.5, 25.5);
line('trend', 50.5, 454.5, 754.5, 48.5);
[[578, 25], [282, 220], [50, 454], [402, 251], [754, 48]].forEach(([x, y]) => {
  add('rect', { class: 'knob', x: x - 1.5, y: y - 1.5, width: 4, height: 4 });
});

add('path', { d: 'M768.500 110h4v3h3l-5 6-5-6h3z', fill: '#e0401c', stroke: '#fff' });
add('rect', { class: 'tag', x: 800, y: 112, width: 40, height: 11 });
add('text', { class: 'tag-text', x: 804, y: 121 }, '1.21425');
```
